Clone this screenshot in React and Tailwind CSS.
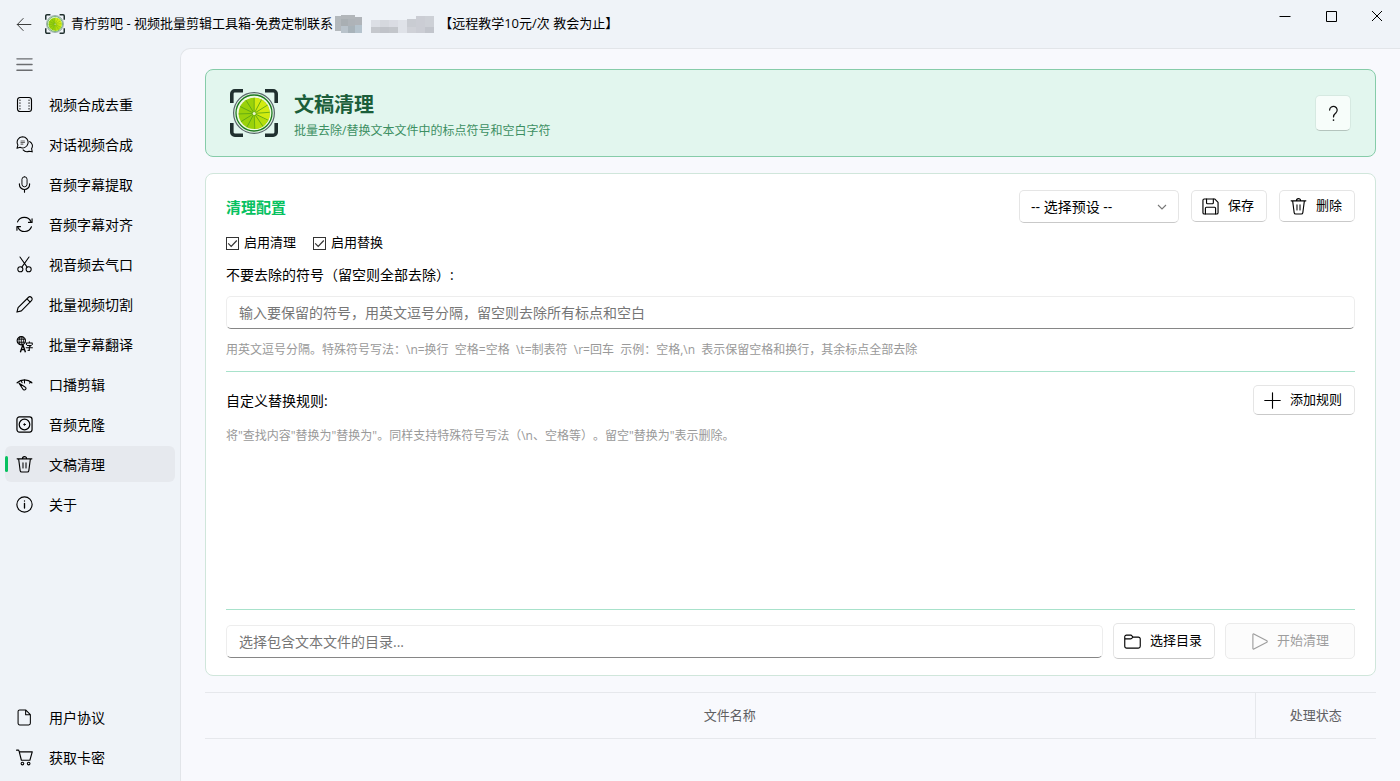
import { useState } from 'react';

const FONT = "font-['Open_Sans','Noto_Sans_CJK_SC',sans-serif]";

function Icon({ children, className = 'size-[17px]' }) {
  return (
    <svg
      viewBox="0 0 18 18"
      className={`${className} shrink-0`}
      fill="none"
      stroke="currentColor"
      strokeLinecap="round"
      strokeLinejoin="round"
      aria-hidden="true"
    >
      {children}
    </svg>
  );
}

const icons = {
  film: (
    <>
      <rect x="1.6" y="1.6" width="14.8" height="14.8" rx="2.6" strokeWidth="1.2" />
      <path d="M4.2 4.2v.4M4.2 7.3v.4M4.2 10.3v.4M4.2 13.4v.4M13.8 4.2v.4M13.8 7.3v.4M13.8 10.3v.4M13.8 13.4v.4" strokeWidth="1.2" />
    </>
  ),
  chat: (
    <>
      <path d="M6.9.8a5.9 5.9 0 1 1-2.6 11.2L1 13l1-3.4A5.9 5.9 0 0 1 6.9.8z" strokeWidth="1.1" />
      <path d="M14.4 5.8a5.2 5.2 0 0 1 2.1 7.6l.7 3.4-3.3-.7a5.6 5.6 0 0 1-6.4-1.5" strokeWidth="1.1" />
      <path d="M5.2 5.2h3.8M5.2 6.9h3.8M5.2 8.6h2.2" stroke="#666" strokeWidth="1.1" />
    </>
  ),
  mic: (
    <>
      <rect x="6.3" y=".8" width="5.4" height="10.6" rx="2.7" />
      <path d="M3.6 8.3v.6a5.4 5.4 0 0 0 10.8 0v-.6M9 14.4v2.8" strokeWidth="1.2" />
    </>
  ),
  sync: (
    <>
      <path d="M1.6 6.2A7.8 7.8 0 0 1 16 6.4M16.4 11.4A7.8 7.8 0 0 1 2 11.8" strokeWidth="1.2" />
      <path d="M17 3v3.8h-3.8M1 15v-3.8h3.8" strokeWidth="1.2" />
    </>
  ),
  scissors: (
    <>
      <circle cx="4.6" cy="14" r="2.7" strokeWidth="1.1" />
      <circle cx="13.4" cy="14" r="2.7" strokeWidth="1.1" />
      <path d="M4.2 1l7.6 10.8M13.8 1L6.2 11.8" strokeWidth="1.1" />
    </>
  ),
  pen: <path d="M1 17l1.2-4.7L13 1.6a2.3 2.3 0 0 1 3.4 3.4L5.7 15.8zM11.6 3l3.4 3.4" strokeWidth="1.2" />,
  translate: (
    <>
      <circle cx="5.6" cy="5" r="4.4" strokeWidth="1.2" />
      <path d="M5.6.6v8.8M1.5 3.4h8.2M1.5 6.6h8.2M3.9 1.2q-1.6 3.8 0 7.6M7.3 1.2q1.6 3.8 0 7.6" strokeWidth=".9" />
      <path d="M4.8 16.6L7.3 9.4l2.5 7.2M5.8 14.4h3" strokeWidth="1.5" />
      <path d="M11 9V7.4h6.2V9M14.1 6v1.2M12 10h4.2l-2.1 1.6v3.8l-1.4-.3M10.8 12.4h6.6" strokeWidth="1.1" />
    </>
  ),
  gauge: (
    <>
      <path d="M1.2 7.2a11.6 11.6 0 0 1 15.6 0" strokeWidth="1.3" />
      <path d="M9 4.2v3.2M14.4 7.6l1.3-1.8M5.6 5.4l.9 1.8" strokeWidth="1.1" />
      <path d="M3.2 7.6l6.4 4a1.7 1.7 0 1 1-2.2 2.4z" strokeWidth="1.2" />
    </>
  ),
  disc: (
    <>
      <rect x="1" y="1" width="16" height="16" rx="2.6" strokeWidth="1.3" />
      <circle cx="9" cy="9" r="5.6" strokeWidth="1.3" />
      <circle cx="9" cy="9" r=".8" fill="currentColor" />
    </>
  ),
  trash: (
    <>
      <path d="M1.2 3h15.6M2.8 3.2l1.6 12.2a1.8 1.8 0 0 0 1.7 1.5h5.8a1.8 1.8 0 0 0 1.7-1.5l1.6-12.2M6.8 2.8a2.2 2.2 0 0 1 4.4 0" strokeWidth="1.2" />
      <path d="M7.4 7.2v5.4M10.6 7.2v5.4" strokeWidth="1.1" />
    </>
  ),
  info: (
    <>
      <circle cx="9" cy="9" r="8.1" strokeWidth="1.2" />
      <path d="M9 7.8v5M9 5.2v.1" strokeWidth="1.4" />
    </>
  ),
  file: <path d="M3.9 1h6.3l5 5v9.2a1.7 1.7 0 0 1-1.7 1.7H3.9a1.7 1.7 0 0 1-1.7-1.7V2.7A1.7 1.7 0 0 1 3.9 1zM10.2 1.2v4.9h4.9" strokeWidth="1.1" />,
  cart: (
    <>
      <path d="M.6 1.2h1.6a1 1 0 0 1 1 .8l2.5 9.9h9L17.2 3H3.6" strokeWidth="1.2" />
      <circle cx="6.8" cy="15.4" r="1.4" strokeWidth="1.1" />
      <circle cx="13.4" cy="15.4" r="1.4" strokeWidth="1.1" />
    </>
  ),
  save: (
    <>
      <path d="M2.4 1h11l3.6 3.6v11A1.4 1.4 0 0 1 15.6 17H2.4A1.4 1.4 0 0 1 1 15.6V2.4A1.4 1.4 0 0 1 2.4 1z" strokeWidth="1.2" />
      <path d="M4.8 1.2v3.9a1 1 0 0 0 1 1h5.2a1 1 0 0 0 1-1V1.2M3.6 16.8v-6a1 1 0 0 1 1-1h8.8a1 1 0 0 1 1 1v6" strokeWidth="1.2" />
    </>
  ),
  plus: <path d="M9 .8v16.4M.8 9h16.4" strokeWidth="1.2" />,
  folder: <path d="M.8 4v10a2 2 0 0 0 2 2h12.4a2 2 0 0 0 2-2V6.4a2 2 0 0 0-2-2H9.6L7.6 2.2H2.6A1.8 1.8 0 0 0 .8 4zM.8 6.2h6a2 2 0 0 0 1.4-.6l1.2-1.2" strokeWidth="1.2" />,
  play: <path d="M2 1.6v14.8a.7.7 0 0 0 1 .6l13.8-7.3a.8.8 0 0 0 0-1.4L3 1a.7.7 0 0 0-1 .6z" strokeWidth="1.2" />,
};

function LimeLogo({ className }) {
  const spokes = [0, 28, 58, 86, 116, 146, 178, 208, 238, 268, 296, 328];
  return (
    <svg viewBox="0 0 48 48" className={`${className} shrink-0`} aria-hidden="true">
      <path
        d="M1.8 14V4.8a3 3 0 0 1 3-3H13M35 1.8h8.2a3 3 0 0 1 3 3V14M46.2 34v9.2a3 3 0 0 1-3 3H35M13 46.2H4.8a3 3 0 0 1-3-3V34"
        fill="none"
        stroke="#20302f"
        strokeWidth="3.6"
      />
      <circle cx="24" cy="24" r="20.4" fill="#e2f2e6" stroke="#566668" strokeWidth="1.2" />
      <circle cx="24" cy="24" r="18" fill="#f0fae0" stroke="#1c7a20" strokeWidth="1.3" />
      <circle cx="24.2" cy="24.4" r="15.6" fill="#9ad20a" />
      <path d="M24.2 24.4V8.8a15.6 15.6 0 0 1 13.5 23.4z" fill="#d2ea10" />
      <path d="M24.2 24.4l13.5 7.8a15.6 15.6 0 0 1-13.5 7.8z" fill="#b4de0c" />
      {spokes.map((a) => (
        <path key={a} d="M24.2 24.4V8.8" stroke="#5aa514" strokeWidth=".8" transform={`rotate(${a} 24.2 24.4)`} />
      ))}
      <circle cx="24.2" cy="24.4" r="1.5" fill="#eef8c8" />
    </svg>
  );
}

// Замазанный контакт в заголовке окна
function Mosaic() {
  const cells = [
    [2, 1, 6, 15, '#b3b8bc'], [8, 0, 14, 4, '#b2b6ba'], [8, 4, 7, 7, '#a9afb3'], [15, 4, 7, 7, '#aeb3b8'],
    [22, 2, 7, 8, '#b0b4b9'], [8, 11, 7, 7, '#b9c3cb'], [15, 11, 7, 7, '#a8b3ba'], [22, 10, 7, 8, '#b5c3cd'],
    [38, 5, 9, 7, '#dcdfe5'], [38, 12, 9, 6, '#c5c8cd'], [47, 5, 9, 7, '#d5d8de'], [47, 12, 9, 6, '#c0c3c9'],
    [56, 5, 9, 7, '#dadce3'], [56, 12, 9, 6, '#c3c6cb'], [65, 5, 9, 13, '#dfe2e8'], [74, 4, 9, 8, '#c9ccd2'],
    [74, 12, 9, 6, '#cfd1d7'], [83, 1, 9, 17, '#cbcdd4'], [92, 1, 9, 11, '#cdd0d6'], [92, 12, 9, 6, '#c2c5cc'],
  ];
  return (
    <svg viewBox="0 0 106 18" className="h-[18px] w-[106px] shrink-0" aria-hidden="true">
      {cells.map(([x, y, w, h, c]) => (
        <rect key={`${x}-${y}`} x={x} y={y} width={w} height={h} fill={c} />
      ))}
    </svg>
  );
}

function NavItem({ icon, label, active, onClick }) {
  return (
    <button
      type="button"
      onClick={onClick}
      className={`relative flex h-9 w-full items-center gap-4 rounded-md pl-[11px] text-left text-sm text-black ${
        active ? 'bg-[#e6e9ee]' : ''
      }`}
    >
      {active && <span className="absolute top-2.5 left-0 h-4 w-[3px] rounded-full bg-[#07c160]" />}
      <Icon>{icons[icon]}</Icon>
      <span className="pt-0.5">{label}</span>
    </button>
  );
}

function Button({ icon, children, className, disabled }) {
  return (
    <button
      type="button"
      disabled={disabled}
      className={`flex shrink-0 items-center gap-[9px] rounded-[5px] border text-[13px] ${
        disabled
          ? 'border-[#ebebeb] bg-[#fcfcfc] text-[#9e9e9e]'
          : 'border-[#e5e5e5] border-b-[#c9c9c9] bg-white text-black'
      } ${className}`}
    >
      <Icon>{icons[icon]}</Icon>
      {children}
    </button>
  );
}

function Check({ label }) {
  const [on, setOn] = useState(true);
  return (
    <label className="flex items-center gap-[5px] text-[13px]">
      <span className="grid">
        <input
          type="checkbox"
          checked={on}
          onChange={(e) => setOn(e.target.checked)}
          className="col-start-1 row-start-1 size-[13px] appearance-none border border-[#333] bg-white"
        />
        {on && (
          <svg viewBox="0 0 13 13" className="pointer-events-none col-start-1 row-start-1 size-[13px]" fill="none" stroke="#333">
            <path d="M2.2 6.3l3 3 5.6-5.8" strokeWidth="1.2" />
          </svg>
        )}
      </span>
      {label}
    </label>
  );
}

const INPUT =
  'h-[33px] rounded-[5px] border border-[#ededed] border-b-[#868686] bg-white px-3 text-sm text-black outline-none placeholder:text-[#767676]';

const nav = [
  ['film', '视频合成去重'],
  ['chat', '对话视频合成'],
  ['mic', '音频字幕提取'],
  ['sync', '音频字幕对齐'],
  ['scissors', '视音频去气口'],
  ['pen', '批量视频切割'],
  ['translate', '批量字幕翻译'],
  ['gauge', '口播剪辑'],
  ['disc', '音频克隆'],
  ['trash', '文稿清理'],
  ['info', '关于'],
];

const footerNav = [
  ['file', '用户协议'],
  ['cart', '获取卡密'],
];

export default function App() {
  const [page, setPage] = useState('文稿清理');

  return (
    <div
      lang="zh-CN"
      className={`flex min-h-screen flex-col bg-[#eff3f8] text-black [text-spacing-trim:space-all] ${FONT}`}
    >
      {/* Title bar */}
      <header className="flex h-12 items-center">
        <button type="button" aria-label="返回" className="ml-4 flex">
          <Icon>
            <path d="M1.4 9h14.4M7.6 2.6L1.4 9l6.2 6.4" stroke="#333" />
          </Icon>
        </button>
        <LimeLogo className="ml-3 size-5" />
        <div className="ml-1.5 flex items-center text-[13px] whitespace-pre">
          <span>青柠剪吧 - 视频批量剪辑工具箱-免费定制联系</span>
          <Mosaic />
          <span>【远程教学10元/次 教会为止】</span>
        </div>
        <div className="ml-auto flex self-start">
          <button type="button" aria-label="最小化" className="flex h-8 w-[46px] items-center justify-center">
            <svg viewBox="0 0 12 12" className="size-3" stroke="#000"><path d="M.5 6.5h11" /></svg>
          </button>
          <button type="button" aria-label="最大化" className="flex h-8 w-[46px] items-center justify-center">
            <svg viewBox="0 0 12 12" className="size-3" stroke="#000" fill="none"><path d="M1.5 1.5h10v10h-10z" /></svg>
          </button>
          <button type="button" aria-label="关闭" className="flex h-8 w-[46px] items-center justify-center">
            <svg viewBox="0 0 12 12" className="size-3" stroke="#000"><path d="M1 1l10 10M11 1L1 11" /></svg>
          </button>
        </div>
      </header>

      <div className="flex flex-1">
        {/* Sidebar */}
        <aside className="flex w-[180px] shrink-0 flex-col px-[5px] pb-1.5">
          <button type="button" aria-label="菜单" className="flex h-8 items-center pl-[11px]">
            <Icon>
              <path d="M1 3h16M1 9h16M1 15h16" stroke="#6b6d70" strokeWidth="1.5" />
            </Icon>
          </button>
          <nav className="mt-1.5 flex flex-1 flex-col gap-1">
            {nav.map(([icon, label]) => (
              <NavItem key={label} icon={icon} label={label} active={page === label} onClick={() => setPage(label)} />
            ))}
            <div className="mt-auto flex flex-col gap-1">
              {footerNav.map(([icon, label]) => (
                <NavItem key={label} icon={icon} label={label} active={page === label} onClick={() => setPage(label)} />
              ))}
            </div>
          </nav>
        </aside>

        <main className="flex min-w-0 flex-1 flex-col gap-4 rounded-tl-[10px] border-t border-l border-[#e2e5e9] bg-[#f8f9fd] px-6 pt-5">
          {/* Banner */}
          <section className="flex h-[88px] shrink-0 items-center rounded-lg border border-[#86cca9] bg-[#e2f6ee] px-6">
            <LimeLogo className="size-12" />
            <div className="ml-4 pt-1">
              <h1 className="text-xl leading-8 font-bold text-[#1b5e3a]">文稿清理</h1>
              <p className="text-xs leading-5 text-[#3c8f62]">批量去除/替换文本文件中的标点符号和空白字符</p>
            </div>
            <button
              type="button"
              aria-label="帮助"
              className="ml-auto flex size-9 items-center justify-center rounded-[5px] border border-[#d6e9e1] border-b-[#b4c4bd] bg-[#f7fdfa]"
            >
              <Icon>
                <path d="M4.9 5.4a4 4 0 1 1 6.8 2.9C10.1 9.6 9 10.3 9 12.6" stroke="#111" strokeWidth="1.3" />
                <path d="M9 16v.1" stroke="#111" strokeWidth="1.7" />
              </Icon>
            </button>
          </section>

          {/* Config card */}
          <section className="flex flex-1 flex-col rounded-lg border border-[#d0e6db] bg-white px-5 py-4">
            <div className="flex items-start gap-3">
              <h2 className="mr-auto self-center pt-0.5 text-[15px] font-bold text-[#07c160]">清理配置</h2>
              <div className="grid w-40 items-center">
                <select
                  aria-label="预设"
                  className="col-start-1 row-start-1 h-[33px] appearance-none rounded-[5px] border border-[#e5e5e5] border-b-[#c9c9c9] bg-white px-[11px] text-sm"
                >
                  <option>-- 选择预设 --</option>
                </select>
                <svg
                  viewBox="0 0 10 10"
                  className="pointer-events-none col-start-1 row-start-1 mr-3 size-2.5 justify-self-end"
                  fill="none"
                  stroke="#777"
                >
                  <path d="M1 3l4 4 4-4" strokeWidth="1.1" />
                </svg>
              </div>
              <Button icon="save" className="h-8 w-[76px] pl-2.5">保存</Button>
              <Button icon="trash" className="h-8 w-[76px] pl-2.5">删除</Button>
            </div>

            <div className="mt-2.5 flex h-5 items-center gap-[17px]">
              <Check label="启用清理" />
              <Check label="启用替换" />
            </div>

            <label htmlFor="keep" className="mt-3 text-sm leading-5">不要去除的符号（留空则全部去除）:</label>
            <input
              id="keep"
              className={`${INPUT} mt-[11px] w-full`}
              placeholder="输入要保留的符号，用英文逗号分隔，留空则去除所有标点和空白"
            />
            <p className="mt-3 text-xs leading-[18px] whitespace-pre text-[#999]">
              {'用英文逗号分隔。特殊符号写法：\\n=换行  空格=空格  \\t=制表符  \\r=回车  示例：空格,\\n  表示保留空格和换行，其余标点全部去除'}
            </p>

            <hr className="mt-3 border-[#a8e2cb]" />

            <div className="mt-[13px] flex items-center justify-between">
              <h3 className="pt-0.5 text-sm">自定义替换规则:</h3>
              <Button icon="plus" className="h-[30px] w-[102px] pl-2.5">添加规则</Button>
            </div>
            <p className="mt-3 text-xs leading-[18px] text-[#999]">
              将"查找内容"替换为"替换为"。同样支持特殊符号写法（\n、空格等）。留空"替换为"表示删除。
            </p>
            <div className="min-h-24 flex-1" />

            <hr className="border-[#a8e2cb]" />
            <div className="mt-[13px] flex items-center gap-2.5">
              <input aria-label="目录" className={`${INPUT} min-w-0 flex-1`} placeholder="选择包含文本文件的目录..." />
              <Button icon="folder" className="h-9 w-[102px] pl-2.5">选择目录</Button>
              <Button icon="play" disabled className="h-9 w-[130px] justify-center">开始清理</Button>
            </div>
          </section>

          {/* Result table */}
          <div className="pb-[42px]">
            <table className="h-[47px] w-full table-fixed border-collapse border-y border-[#e6e8ec] text-[13px] text-[#5f6063]">
              <thead>
                <tr>
                  <th className="font-normal">文件名称</th>
                  <th className="w-[121px] border-l border-[#e6e8ec] font-normal">处理状态</th>
                </tr>
              </thead>
            </table>
          </div>
        </main>
      </div>
    </div>
  );
}
